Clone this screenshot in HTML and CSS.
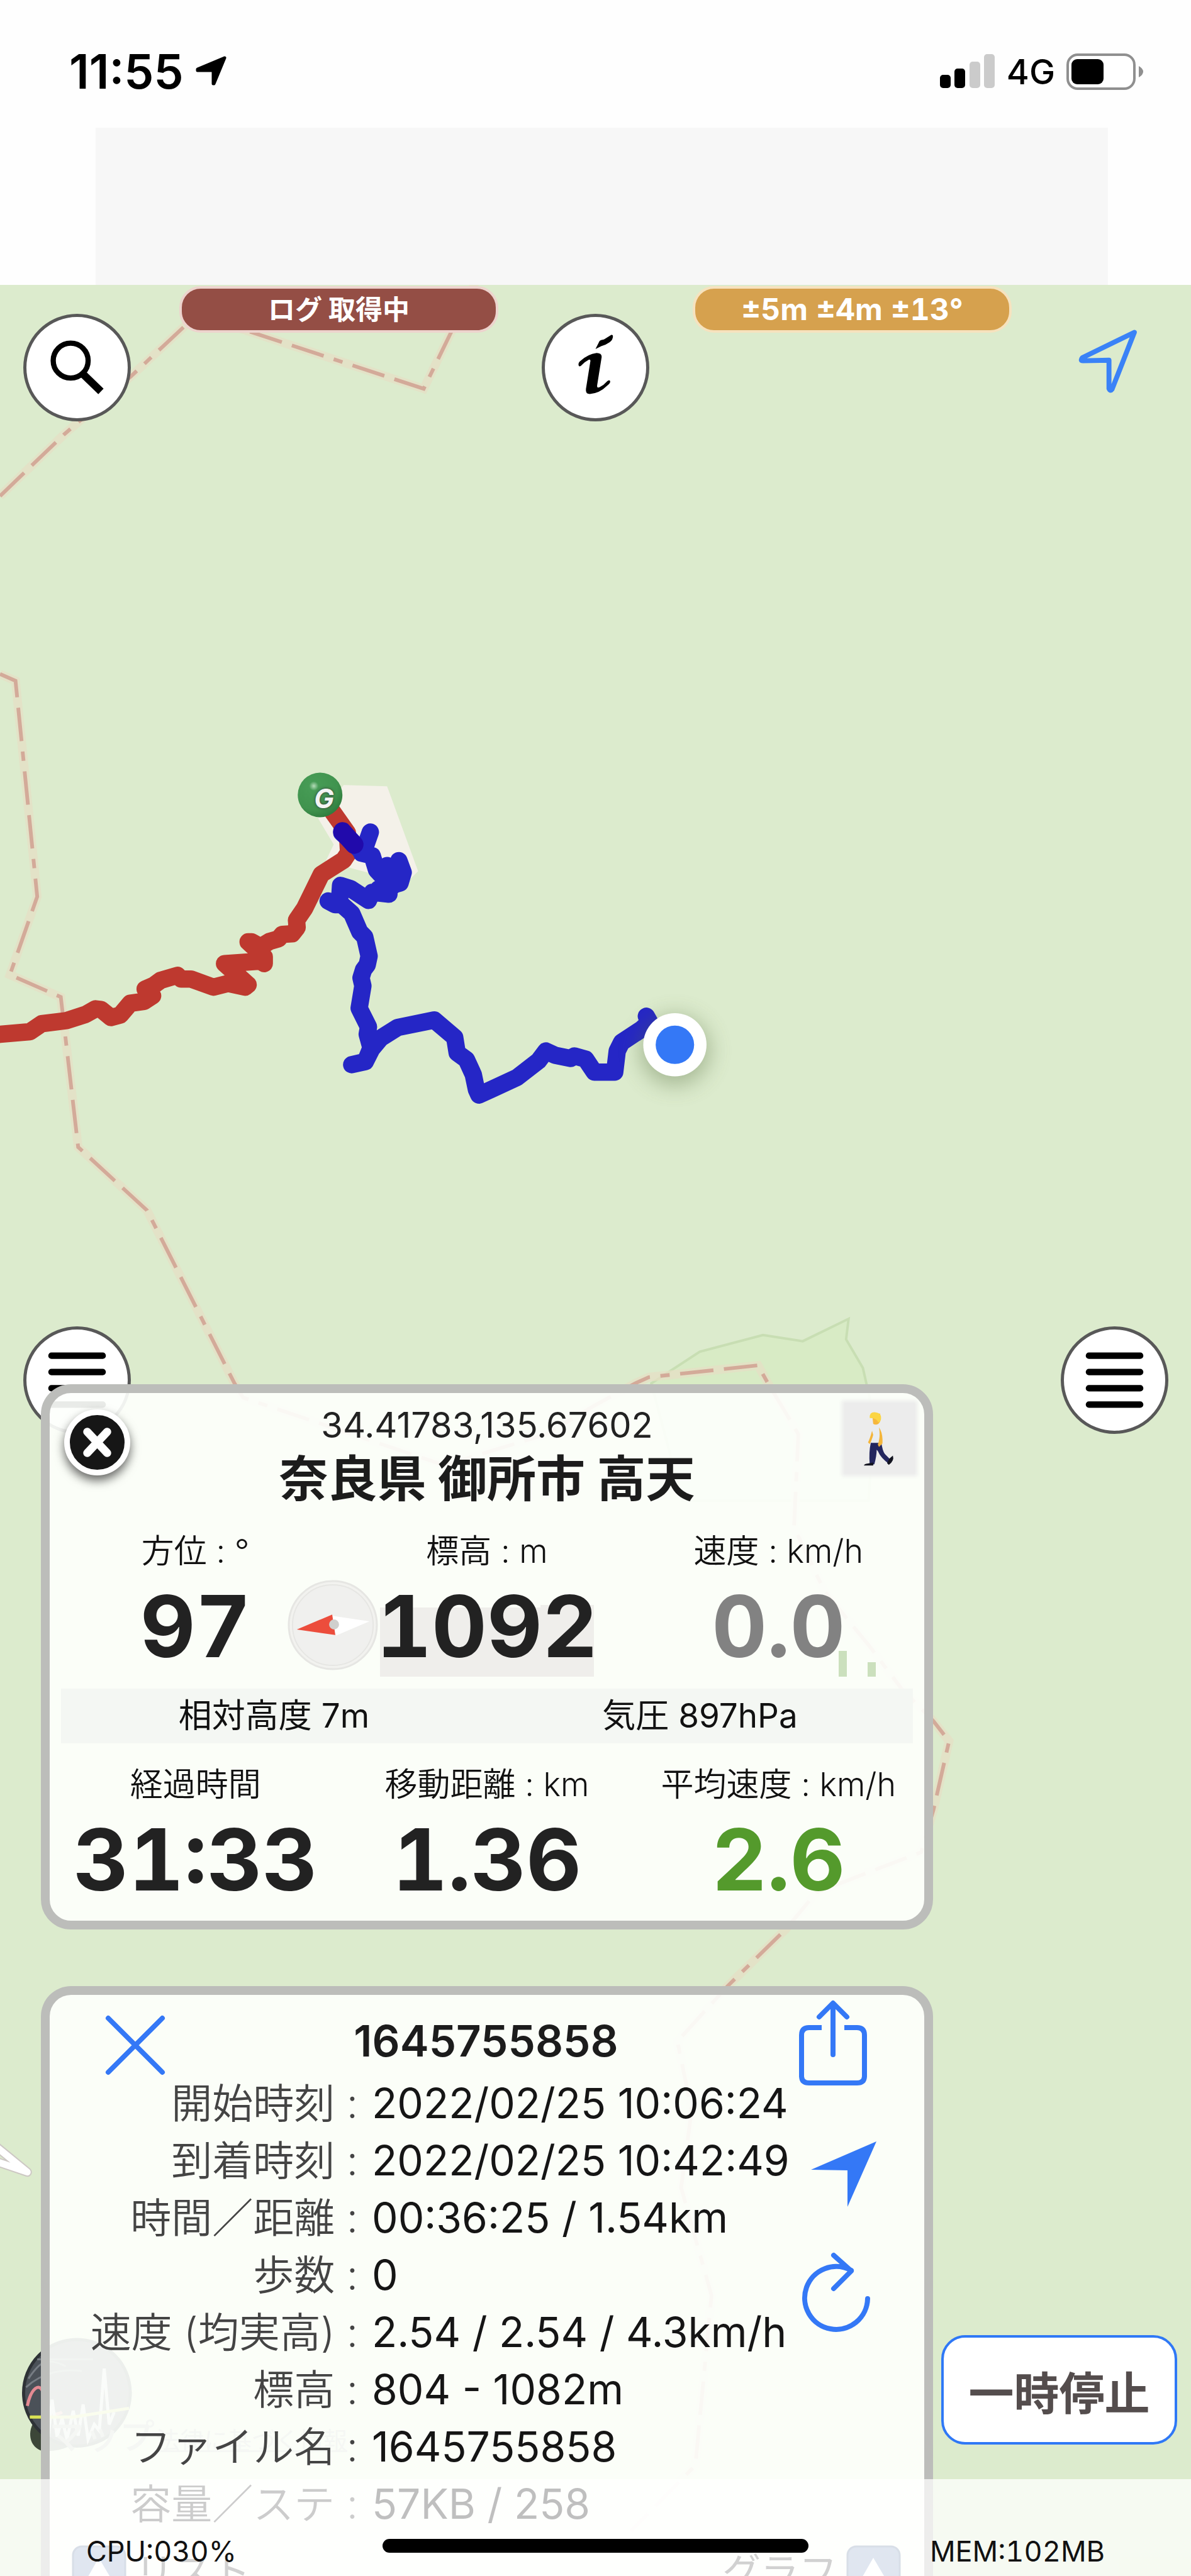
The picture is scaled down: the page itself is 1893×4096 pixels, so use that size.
FILE: index.html
```html
<!DOCTYPE html>
<html lang="ja">
<head>
<meta charset="utf-8">
<meta name="viewport" content="width=device-width, initial-scale=1">
<title>ログ 取得中</title>
<link rel="stylesheet" href="styles.css">
</head>
<body>
<main class="screen">

  <!-- Map canvas -->
  <div class="map">
    <svg class="map-art" viewBox="0 0 1920 4155" preserveAspectRatio="xMinYMin slice" aria-hidden="true">
      <defs>
        <radialGradient id="goal" cx="36%" cy="30%" r="75%">
          <stop offset="0" stop-color="#b5dcb9"/><stop offset=".14" stop-color="#469b55"/>
          <stop offset=".7" stop-color="#40934e"/><stop offset="1" stop-color="#2f7a3d"/>
        </radialGradient>
        <filter id="soft" x="-60%" y="-60%" width="220%" height="220%"><feGaussianBlur stdDeviation="18"/></filter>
      </defs>
      <path class="park" d="M1050 2231 1128 2180 1230 2153 1294 2163 1368 2127 1364 2160 1391 2206 1410 2290 1400 2420 1100 2420Z"/>
      <g class="border-glow">
        <path d="M0 800 104 700 211 607 318 507 683 627 762 464 800 380"/>
        <path d="M0 1087 25 1098 60 1446 16 1572 98 1608 126 1850 237 1952 378 2231 392 2254 716 2363 881 2313 958 2267 1024 2231 1046 2221 1222 2202 1238 2231 1258 2264 1287 2313 1280 2463 1329 2566 1401 2654 1453 2723 1505 2776 1530 2808 1505 2918 1485 2987 1316 3052 1267 3111 1173 3203 1092 3292 1115 3404 1098 3528 1147 3702 1121 3976 1017 4082"/>
      </g>
      <g class="border-dash">
        <path d="M0 800 104 700 211 607 318 507 683 627 762 464 800 380"/>
        <path d="M0 1087 25 1098 60 1446 16 1572 98 1608 126 1850 237 1952 378 2231 392 2254 716 2363 881 2313 958 2267 1024 2231 1046 2221 1222 2202 1238 2231 1258 2264 1287 2313 1280 2463 1329 2566 1401 2654 1453 2723 1505 2776 1530 2808 1505 2918 1485 2987 1316 3052 1267 3111 1173 3203 1092 3292 1115 3404 1098 3528 1147 3702 1121 3976 1017 4082"/>
      </g>
      <path fill="#f4f1e9" d="M554 1266 624 1268 674 1405 655 1424 525 1389 538 1362 513 1320Z"/>
      <path class="road-edge" d="M-6 3462 44 3503 -6 3486"/>
      <path class="road" d="M-6 3462 44 3503 -6 3486"/>
      <path class="track track-red" d="M-10 1669 0 1668 48 1664 67 1651 107 1646 138 1636 154 1627 163 1628 179 1641 194 1637 210 1618 232 1615 246 1606 234 1595 248 1589 259 1581 286 1573 292 1579 308 1579 344 1592 368 1586 395 1592 400 1588 362 1554 420 1550 426 1554 426 1543 400 1519 406 1519 420 1527 435 1518 449 1514 455 1507 471 1506 479 1496 478 1484 491 1465 518 1410 554 1387 562 1375 560 1343 531 1302 516 1283"/>
      <path class="track track-blue" d="M1042 1639 1047 1648 1034 1660 1002 1681 995 1695 991 1729 958 1729 944 1708 926 1703 920 1707 895 1702 880 1695 868 1711 833 1738 792 1757 772 1766 768 1757 763 1733 752 1709 737 1698 733 1673 700 1645 641 1657 614 1674 599 1692 589 1712 567 1717 589 1712 598 1690 592 1668 594 1656 579 1626 585 1590 582 1577 586 1564 592 1556 595 1542 588 1511 580 1503 567 1473 551 1459 540 1459 529 1453 547 1459 549 1428 565 1433 594 1452 600 1439 627 1442 610 1434 645 1424 650 1407 643 1388 632 1420 624 1396 632 1430 607 1403 600 1380 583 1376 590 1362 597 1342 585 1376 569 1359 551 1343"/>
      <path class="overlap" d="M552 1341 571 1362"/>
      <circle cx="516" cy="1282" r="36" fill="url(#goal)"/>
      <circle cx="1088" cy="1694" r="56" fill="#51693a" opacity=".4" filter="url(#soft)"/>
      <circle cx="1088" cy="1685" r="51" fill="#fff"/>
      <circle cx="1088" cy="1685" r="31" fill="#3478f6"/>
      <!-- graph shortcut -->
      <g>
        <path fill="#3c4638" d="M60 3900C44 3914 44 3944 66 3952c16 2 30 0 44-6l-10-50z"/>
        <circle cx="124" cy="3859" r="86" fill="#4b5158" stroke="#2e3236" stroke-width="5"/>
        <path fill="none" stroke="#777d84" stroke-width="3" d="M46 3836c20-30 30-34 60-20M42 3850c26-24 60-30 90-26M60 3805h90"/>
        <path fill="none" stroke="#e48a92" stroke-width="5" d="M44 3880c6-28 20-40 26-20s12 42 30 30"/>
        <path fill="none" stroke="#d5d8dc" stroke-width="5" d="M78 3930l6-60 8 60 8-30 8 34 10-46 8 40 8-50 8 56 10-24 8 10 8-100 8 90 8-20"/>
        <path fill="none" stroke="#d9e255" stroke-width="5" d="M48 3898h70l90-14"/>
      </g>
    </svg>
    <span class="goal-letter">G</span>
    <p class="map-credit"><span class="map-brand">マップ</span> <a href="#legal">法律に基づく情報</a></p>
  </div>

  <header class="top">
    <div class="status">
      <div class="clock"><span>11:55</span>
        <svg width="52" height="50" viewBox="0 0 52 50" aria-hidden="true"><path fill="#000" stroke="#000" stroke-width="5" stroke-linejoin="round" d="M47 3 4 21v2h25v21h1z"/></svg>
      </div>
      <div class="signals">
        <svg width="88" height="56" viewBox="0 0 88 56" aria-hidden="true"><rect y="33" width="17" height="21" rx="5"/><rect x="23" y="23" width="17" height="31" rx="5"/><rect x="47" y="12" width="17" height="42" rx="5" fill="#cbcbcb"/><rect x="70" width="17" height="54" rx="5" fill="#cbcbcb"/></svg>
        <span>4G</span>
        <svg width="122" height="58" viewBox="0 0 122 58" aria-hidden="true"><rect x="2" y="2" width="106" height="54" rx="16" fill="#fff" stroke="#8f8f8f" stroke-width="4"/><rect x="8" y="9" width="51" height="40" rx="9"/><path fill="#8f8f8f" d="M115 20q7 4 7 9t-7 9z"/></svg>
      </div>
    </div>
    <div class="banner"></div>
  </header>

  <section class="overlay" aria-label="地図の操作">
    <div class="badges">
      <p class="badge badge-log">ログ 取得中</p>
      <p class="badge badge-accuracy">±5m ±4m ±13°</p>
    </div>
    <div class="tools">
      <button class="round" type="button" aria-label="検索"><svg viewBox="0 0 174 174"><g fill="none" stroke="#000"><circle cx="76" cy="75" r="30" stroke-width="9"/><path stroke-width="13" d="m97 98 31 30"/></g></svg></button>
      <button class="round" type="button" aria-label="情報"><svg viewBox="0 0 180 180"><path d="M90 57 97 43Q99 41 105 40L118 32Q121 31 121 34 121 41 115 45 108 50 100 52ZM60 86Q59 82 62 79 76 66 92 64q9 0 9 7l-8 50q-1 6 4 4 8-4 14-11 4-3 5 0 1 3-5 8-14 14-31 15-8 0-7-9l8-50q0-3-3-2-8 4-14 11-3 2-4-1Z"/></svg></button>
      <button class="plain" type="button" aria-label="現在地"><svg viewBox="0 0 174 174"><path fill="none" stroke="#3a82f7" stroke-width="8" stroke-linejoin="round" d="M120 30 36 71q-4 5 1 5l42-1v46q2 5 5 1z"/></svg></button>
    </div>
  </section>

  <section class="dock">
    <div class="menus">
      <button class="round" type="button" aria-label="左メニュー"><svg viewBox="0 0 174 174"><path class="bars" d="M43 45h88M43 73h88M43 101h88M43 129h88"/></svg></button>
      <button class="round" type="button" aria-label="右メニュー"><svg viewBox="0 0 174 174"><path class="bars" d="M43 45h88M43 73h88M43 101h88M43 129h88"/></svg></button>
    </div>

    <article class="card live">
      <header class="live-head">
        <button class="close" type="button" aria-label="閉じる"><svg viewBox="0 0 88 88"><path stroke="#fff" stroke-width="13" stroke-linecap="round" d="m28 27 32 34m0-34L28 61"/></svg></button>
        <div class="place"><p class="coords">34.41783,135.67602</p><h2>奈良県 御所市 高天</h2></div>
        <button class="mode" type="button" aria-label="徒歩"><svg viewBox="0 0 122 122">
          <path fill="#f6b73c" d="M48 18q10 2 14 0v14q-5 8-12 4z"/><path fill="#fbd543" d="M44 26q-1-11 10-10 12 1 9 14-4 6-5 2-3-6-14-6z"/>
          <path fill="#23265e" d="M46 68h18q2 14 6 20l11 11-4 6q-14-10-19-22l-2-2q0 10-4 25l-8 1q-2-22 2-39z"/>
          <path fill="#e9edf0" d="M50 41q10-4 13 2l3 26H46q0-16 4-28z"/><path fill="#f4b53a" d="M60 42q7 10 6 28l-6 6-2-4q5-14 2-30zM48 48q-3 12-7 20l3 3q4-8 6-16z"/>
          <path fill="#12131f" d="M38 105l12-2v5H34q0-2 4-3zM78 96l6-5q3 9-7 16l-3-3z"/></svg></button>
      </header>

      <dl class="metrics">
        <div class="metric"><dt>方位 : °</dt><dd>97</dd>
          <svg class="compass" viewBox="0 0 146 146" aria-hidden="true"><circle cx="73" cy="73" r="71" fill="#f2f2ef" stroke="#e6e6e3" stroke-width="3"/><circle cx="73" cy="73" r="65" fill="#f0f0ee" stroke="#e6e6e3" stroke-width="2"/><path fill="#fff" d="m72 58 60 9-54 23z"/><path fill="#ec4d3c" d="m15 80 57-24 5 33z"/><circle cx="75" cy="72" r="8" fill="#cfcfcd"/></svg>
        </div>
        <div class="metric"><dt>標高 : m</dt><dd>1092</dd>
          <svg class="profile" viewBox="0 0 340 114" preserveAspectRatio="none" aria-hidden="true"><path fill="#efeeeb" d="M0 5h255V1h85v113H0z"/></svg>
        </div>
        <div class="metric idle"><dt>速度 : km/h</dt><dd>0.0</dd>
          <svg class="speed-bars" viewBox="0 0 60 41" aria-hidden="true"><path fill="#cbe0bd" d="M0 0h13v41H0zM46 18h13v23H46z"/></svg>
        </div>
      </dl>
      <div class="baro"><p>相対高度 7m</p><p>気圧 897hPa</p></div>
      <dl class="metrics">
        <div class="metric"><dt>経過時間</dt><dd>31:33</dd></div>
        <div class="metric"><dt>移動距離 : km</dt><dd>1.36</dd></div>
        <div class="metric good"><dt>平均速度 : km/h</dt><dd>2.6</dd></div>
      </dl>
    </article>

    <article class="card log">
      <header class="log-head">
        <button class="icon" type="button" aria-label="閉じる"><svg width="96" height="96" viewBox="0 0 96 96"><path class="line" d="m5 5 86 86m0-86L5 91"/></svg></button>
        <h2>1645755858</h2>
        <button class="icon" type="button" aria-label="共有"><svg width="108" height="136" viewBox="0 0 108 136"><path class="line" d="M54 87V6M32 27 54 5l22 22"/><path class="line butt" d="M36 44H16Q4 44 4 56v65q0 11 12 11h76q12 0 12-11V56q0-12-12-12H72"/></svg></button>
      </header>
      <div class="log-body">
        <dl class="facts">
          <dt>開始時刻 :</dt><dd>2022/02/25 10:06:24</dd>
          <dt>到着時刻 :</dt><dd>2022/02/25 10:42:49</dd>
          <dt>時間／距離 :</dt><dd>00:36:25 / 1.54km</dd>
          <dt>歩数 :</dt><dd>0</dd>
          <dt>速度 (均実高) :</dt><dd>2.54 / 2.54 / 4.3km/h</dd>
          <dt>標高 :</dt><dd>804 - 1082m</dd>
          <dt>ファイル名 :</dt><dd>1645755858</dd>
          <dt>容量／ステ :</dt><dd>57KB / 258</dd>
        </dl>
        <div class="actions">
          <button class="icon go" type="button" aria-label="ここへ移動"><svg width="104" height="104" viewBox="0 0 104 104"><path fill="#3478f6" d="M104 0 0 45l58 1v58z"/></svg></button>
          <button class="icon" type="button" aria-label="更新"><svg width="108" height="128" viewBox="0 0 108 128"><path class="line" d="M104 74A50 50 0 1 1 78 29M50 5l28 25-28 28"/></svg></button>
        </div>
      </div>
      <footer class="log-foot">
        <button type="button"><svg width="87" height="87" viewBox="0 0 87 87" aria-hidden="true"><rect x="2" y="2" width="83" height="83" rx="14" fill="#8ba3c7" stroke="#6f87a8" stroke-width="3"/><path fill="#fff" d="m43 20 26 44H18z"/></svg>リスト</button>
        <button type="button">グラフ<svg width="87" height="87" viewBox="0 0 87 87" aria-hidden="true"><rect x="2" y="2" width="83" height="83" rx="14" fill="#8ba3c7" stroke="#6f87a8" stroke-width="3"/><path fill="#fff" d="m43 20 26 44H18z"/></svg></button>
      </footer>
    </article>
    <button class="pause" type="button">一時停止</button>
  </section>

  <footer class="home">
    <span>CPU:030%</span><span class="indicator"></span><span class="memory">MEM:102MB</span>
  </footer>
</main>
</body>
</html>
```
FILE: styles.css
```css
* { box-sizing: border-box; }

body, p, h2, dl, dd { margin: 0; }

body {
  font-family: Inter, "Noto Sans CJK JP", sans-serif;
  color: #222;
  background: #dcebcd;
}

button {
  margin: 0;
  padding: 0;
  border: 0;
  background: none;
  font: inherit;
  color: inherit;
}

svg { display: block; }

.screen {
  position: relative;
  display: flex;
  flex-direction: column;
  min-height: 100vh;
  overflow: hidden;
}

/* Map */
.map {
  position: absolute;
  inset: 0;
  background: #dcebcd;
}

.map-art {
  width: 100%;
  height: 100%;
}

.park { fill: #d8ebc5; stroke: #c8deb3; stroke-width: 4; }
.border-glow { fill: none; stroke: #e5dfc4; stroke-width: 14; opacity: .75; }
.border-dash { fill: none; stroke: #d3aa99; stroke-width: 6; stroke-dasharray: 54 17 54 17 15 17; }
.road-edge { fill: none; stroke: #cdc8c4; stroke-width: 15; stroke-linejoin: round; }
.road { fill: none; stroke: #fff; stroke-width: 11; stroke-linejoin: round; }
.track { fill: none; stroke-width: 28; stroke-linecap: round; stroke-linejoin: round; }
.track-red { stroke: #be392f; }
.track-blue { stroke: #2526c6; }
.overlap { fill: none; stroke: #210aab; stroke-width: 30; stroke-linecap: round; }

.goal-letter {
  position: absolute;
  left: 498px;
  top: 1244px;
  width: 34px;
  text-align: center;
  font-size: 42px;
  line-height: 52px;
  font-weight: 700;
  font-style: italic;
  color: #f4f4f4;
  text-shadow: 0 0 4px #333;
}

.map-credit {
  position: absolute;
  left: 78px;
  bottom: 188px;
  display: flex;
  align-items: baseline;
  gap: 2px;
  font-size: 38px;
  line-height: 56px;
  color: #999;
}

.map-credit a { color: inherit; }
.map-brand { font-size: 56px; font-weight: 500; }

/* Status bar */
.top {
  position: relative;
  padding: 0 132px 0 152px;
  background: #fefefe;
}

.status {
  display: flex;
  justify-content: space-between;
  align-items: center;
  height: 203px;
  margin: 0 -56px 0 -42px;
  padding-top: 24px;
}

.clock, .signals { display: flex; align-items: center; color: #000; }
.clock { gap: 18px; font-size: 75px; font-weight: 600; }
.signals { gap: 18px; font-size: 55px; font-weight: 500; }

.banner { height: 250px; background: #f7f7f7; }

/* Badges and round tools share one area over the map */
.overlay { position: relative; display: grid; height: 217px; }
.badges, .tools { grid-area: 1 / 1; }

.badges {
  display: flex;
  justify-content: space-between;
  align-items: flex-start;
  padding: 2px 285px 0;
}

.badge {
  width: 507px;
  border: 4px solid;
  border-radius: 34px;
  text-align: center;
  font-size: 43px;
  line-height: 66px;
  font-weight: 700;
  color: #fff;
}

.badge-log { background: #944e45; border-color: #edd3cd; }
.badge-accuracy { background: #d6a14e; border-color: #f6e2be; font-size: 48px; font-variant-numeric: tabular-nums; }

.tools, .menus {
  display: flex;
  justify-content: space-between;
  align-items: flex-start;
}

.tools { padding: 46px 37px 0; }

.round, .plain { width: 171px; height: 171px; }

.round {
  overflow: hidden;
  border: 5px solid #585858;
  border-radius: 50%;
  background: #fff;
}

.bars { stroke: #000; stroke-width: 11; stroke-linecap: round; }

/* Lower dock */
.dock {
  position: relative;
  display: grid;
  grid-template-columns: minmax(0, 1fr) 375px;
  grid-template-rows: 92px auto auto;
  column-gap: 13px;
  margin-top: auto;
  padding: 0 22px 0 65px;
}

.menus {
  grid-area: 1 / 1 / 2 / 3;
  margin: 0 14px 0 -28px;
}

.card {
  position: relative;
  grid-column: 1;
  border: 14px solid #bcbdba;
  border-radius: 48px;
  background: rgba(253, 255, 252, .92);
}

.card h2 { color: #1c1c1c; white-space: nowrap; }

.live { padding: 20px 0 32px; }

.live-head {
  display: grid;
  grid-template-columns: 160px 1fr 160px;
  align-items: start;
}

.close {
  width: 105px;
  height: 105px;
  margin: 6px 0 0 23px;
  border: 9px solid #fff;
  border-radius: 50%;
  background: #161616;
  box-shadow: 0 8px 16px rgba(0, 0, 0, .6);
}

.place { text-align: center; }
.coords { font-size: 56px; line-height: 62px; }
.place h2 { font-size: 78px; line-height: 110px; font-weight: 700; }

.mode {
  width: 112px;
  height: 112px;
  margin: -4px 15px 0 auto;
  background: #ececec;
  box-shadow: 0 0 6px 4px #ececec;
}

.metrics { display: grid; grid-template-columns: repeat(3, minmax(0, 1fr)); padding-top: 30px; }

.metric { position: relative; text-align: center; white-space: nowrap; }

.metric dt { font-size: 52px; line-height: 60px; font-weight: 350; color: #111; }

.metric dd {
  position: relative;
  z-index: 1;
  margin-top: 24px;
  font-size: 136px;
  line-height: 130px;
  font-weight: 700;
  font-variant-numeric: tabular-nums;
}

.idle dd { color: #828282; }
.good dd { color: #549a2c; }

.compass { position: absolute; right: -59px; top: 75px; width: 144px; height: 144px; }
.profile { position: absolute; left: 62px; top: 114px; width: 340px; height: 115px; }
.speed-bars { position: absolute; right: 76px; top: 188px; z-index: 2; width: 60px; height: 41px; }

.baro {
  display: grid;
  grid-template-columns: 1fr 1fr;
  margin: 34px 18px 6px;
  background: #f4f7f3;
  text-align: center;
  font-size: 53px;
  line-height: 87px;
  color: #111;
}

.log {
  margin-top: 90px;
  border-bottom: 0;
  border-radius: 48px 48px 0 0;
}

.log-head {
  display: flex;
  justify-content: space-between;
  align-items: flex-start;
  height: 127px;
  padding: 8px 91px 0 88px;
}

.log-head > .icon:first-child { width: 108px; margin-top: 24px; }
.log-head h2 { font-size: 69px; line-height: 130px; font-weight: 600; }
.line { fill: none; stroke: #3478f6; stroke-width: 8; stroke-linecap: round; stroke-linejoin: round; }
.butt { stroke-linecap: butt; }

.log-body { display: grid; grid-template-columns: minmax(0, 1fr) 140px; }

.facts {
  display: grid;
  grid-template-columns: 490px 1fr;
  column-gap: 22px;
  font-size: 66px;
  line-height: 91px;
  white-space: nowrap;
}

.facts dt { text-align: right; font-size: 65px; font-weight: 350; color: #444; }
.facts dd { color: #151515; }

.actions { padding-top: 106px; }
.actions .icon { display: block; margin: 0 0 72px -54px; }
.actions .go { margin-left: -40px; }

.log-foot {
  display: flex;
  justify-content: space-between;
  align-items: flex-start;
  height: 69px;
  padding: 20px 37px 0 35px;
  overflow: hidden;
}

.log-foot button {
  display: flex;
  align-items: center;
  gap: 14px;
  font-size: 61px;
  line-height: 87px;
  color: #555;
}

.pause {
  grid-column: 2;
  grid-row: 3;
  height: 174px;
  margin-top: 645px;
  border: 4px solid #2f78f6;
  border-radius: 38px;
  background: #fff;
  font-size: 72px;
  font-weight: 700;
  color: #544d4d;
}

/* Home bar */
.home {
  position: absolute;
  inset: auto 0 0;
  display: grid;
  grid-template-columns: 1fr 677px 1fr;
  align-items: center;
  height: 154px;
  padding: 76px 137px 0;
  background: rgba(255, 255, 255, .73);
  font-size: 45px;
  line-height: 50px;
  font-variant-numeric: tabular-nums;
  color: #111;
}

.indicator { height: 22px; margin-top: -18px; border-radius: 11px; background: #000; }
.memory { text-align: right; }
```
